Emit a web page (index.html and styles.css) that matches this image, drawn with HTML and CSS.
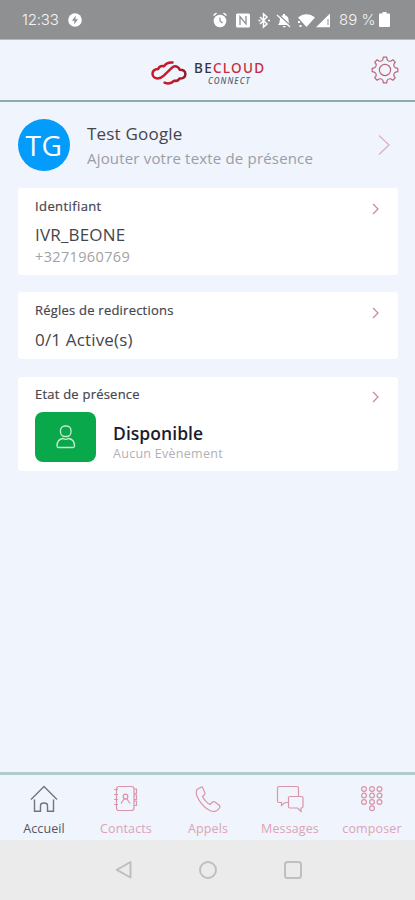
FILE: index.html
```html
<!DOCTYPE html>
<html lang="fr">
<head>
<meta charset="utf-8">
<title>BeCloud Connect</title>
<link rel="stylesheet" href="styles.css">
</head>
<body>
<div class="status">
  <span class="clock">12:33</span>
  <svg class="bolt" width="14" height="14" viewBox="0 0 14 14"><circle cx="7" cy="7" r="6.8" fill="#fff"/><path d="M7.8 2.5 4 7.8h2.5L6 11.5 10 6.2H7.400z" fill="#8f9092"/></svg>
  <svg class="sys" width="120" height="20" viewBox="0 0 120 20" fill="#fff">
    <circle cx="8" cy="11" r="6.300"/><path d="M1.500 5.500 4.500 3M14.500 5.500l-3-2.500" stroke="#fff" stroke-width="1.600"/><path d="M8 7.500V11l2.500 2" fill="none" stroke="#8f9092" stroke-width="1.200"/>
    <rect x="24" y="3.500" width="14" height="14" rx="1.500"/><path d="M28 15V6.500l6 7.500V6" fill="none" stroke="#8f9092" stroke-width="1.300"/>
    <path d="m48 7 7 7-3.500 3V4l3.500 3-7 7" fill="none" stroke="#fff" stroke-width="1.500"/><path d="M46.500 9.800h2v1.500h-2zM56 9.800h2v1.500h-2z"/>
    <path d="M66 15c2-2 1.500-4 2-6.500.5-2 2-3 3-3.200V4h2v1.300c2 .4 3.300 2 3.500 4 .2 2 0 4 1.800 5.700zM70.500 16h3.500l-1.700 1.700z"/><path d="m66 4 14 13" stroke="#8f9092" stroke-width="1.200"/><path d="m65 5 13 12" stroke="#fff" stroke-width="1.200"/>
    <path d="M86 7.500c5-4.500 12-4.500 17 0L94.500 17z"/><path d="M86 11h2v2h-2zM87.500 15h2v2h-2z"/>
    <path d="M104 17.300 118 3.500v13.800z"/><path d="M116 9v6" stroke="#8f9092"/>
  </svg>
  <span class="percent">89 %</span>
  <svg class="battery" width="11" height="15" viewBox="0 0 11 15"><path d="M3.500 0h4v1.500H10q1 0 1 1V14q0 1-1 1H1q-1 0-1-1V2.500q0-1 1-1h2.500z" fill="#fff"/></svg>
</div>
<header class="header">
  <svg class="cloud" width="36" height="24" viewBox="0 0 36 24" fill="none" stroke-linecap="round" stroke-linejoin="round">
    <defs><linearGradient id="red" x1="0" x2="1"><stop stop-color="#c51a2c"/><stop offset=".55" stop-color="#c51a2c"/><stop offset="1" stop-color="#951a2b"/></linearGradient></defs>
    <path d="M21.500 1.600c-4-.6-6.500 1-8.500 3.600-2.800-.6-5 .6-5.700 2.700C3.800 8.200 1.500 10 1.500 12.700c0 2.800 2.200 4.700 5.300 4.700 2.500 0 4-.9 5.700-2.500l8-7.700c2-2 4.300-2.200 6-1.200 1.200.7 1.900 1.500 2.200 2.800 3.500-.2 5.700 1.500 5.700 4.200 0 3-2.300 4.700-6 4.600-1 2-2.900 2.600-5.200 2.100-2.400 2.700-6 3.500-9.700 2" stroke="url(#red)" stroke-width="2.500"/>
  </svg>
  <div class="brand">
    <div class="brand-name">BE<span>CLOUD</span></div>
    <div class="brand-sub">CONNECT</div>
  </div>
  <svg class="gear" width="28" height="28" viewBox="-14 -14 28 28" fill="none" stroke="#bd6578" stroke-width="1.200" stroke-linejoin="round">
    <defs><path id="tooth" d="M-3.750-9.050Q-2.300-9.700-2.100-10.700L-1.700-12.800H1.700L2.100-10.700Q2.300-9.700 3.750-9.050"/></defs>
    <use href="#tooth"/><use href="#tooth" transform="rotate(45)"/><use href="#tooth" transform="rotate(90)"/><use href="#tooth" transform="rotate(135)"/><use href="#tooth" transform="rotate(180)"/><use href="#tooth" transform="rotate(225)"/><use href="#tooth" transform="rotate(270)"/><use href="#tooth" transform="rotate(315)"/>
    <circle r="5.600"/>
  </svg>
</header>
<main class="main">
  <section class="profile">
    <div class="avatar">TG</div>
    <div class="who">
      <div class="name">Test Google</div>
      <div class="note">Ajouter votre texte de présence</div>
    </div>
    <svg class="chev-big" width="12" height="20" viewBox="0 0 12 20"><path d="m1 .5 10 9.500L1 19.500" fill="none" stroke="#dfb0be" stroke-width="1.300"/></svg>
  </section>
  <section class="card card-id">
    <div class="card-head"><h2 class="t-id">Identifiant</h2><svg class="chev" width="7" height="12" viewBox="0 0 7 12"><path d="M1 1l5 5-5 5" fill="none" stroke="#c98694" stroke-width="1.200"/></svg></div>
    <div class="value">IVR_BEONE</div>
    <div class="phone">+3271960769</div>
  </section>
  <section class="card card-rules">
    <div class="card-head"><h2>Régles de redirections</h2><svg class="chev" width="7" height="12" viewBox="0 0 7 12"><path d="M1 1l5 5-5 5" fill="none" stroke="#c98694" stroke-width="1.200"/></svg></div>
    <div class="value">0/1 Active(s)</div>
  </section>
  <section class="card card-state">
    <div class="card-head"><h2>Etat de présence</h2><svg class="chev" width="7" height="12" viewBox="0 0 7 12"><path d="M1 1l5 5-5 5" fill="none" stroke="#c98694" stroke-width="1.200"/></svg></div>
    <div class="presence">
      <div class="badge"><svg width="20" height="24" viewBox="0 0 20 24" fill="none" stroke="#c4f0d0" stroke-width="1.300"><rect x="4.500" y="1" width="10.500" height="10.500" rx="4.500"/><path d="M7 13.500c-3.500.5-6 3-6 7.500q0 1.500 1.500 1.500h14.500q1.500 0 1.500-1.500c0-4.500-2.500-7-6-7.500-1.500 1-4 1-5.500 0z"/></svg></div>
      <div class="state">
        <div class="available">Disponible</div>
        <div class="event">Aucun Evènement</div>
      </div>
    </div>
  </section>
</main>
<nav class="tabs">
  <div class="tab active"><svg width="28" height="28" viewBox="0 0 28 28"><path d="M1 14.500 14 1.500l13 13M4.500 14.500v11.800h6v-5.800q0-2.500 3.500-2.500t3.500 2.500v5.800h6V14.500"/></svg><span>Accueil</span></div>
  <div class="tab"><svg width="28" height="28" viewBox="0 0 28 28"><rect x="4.500" y="1.500" width="17.500" height="24" rx="2.500"/><path d="M2 4.500h4M2 9.500h4M2 14.500h4M2 19.500h4M22 4h2.500v4.500H22M22 10h2.500v4.500H22M22 16h2.500v4.500H22M9 18.500l3-4.500h3l3 4.500"/><circle cx="13.500" cy="11.500" r="2.300"/></svg><span>Contacts</span></div>
  <div class="tab"><svg width="28" height="28" viewBox="0 0 28 28"><path d="M7.500 2 3 4.500C-.5 11 11 25.500 19.500 26.500c2.500.3 4-.8 6-3.500q1-1.500-.5-3l-4-3q-1.500-1-3 .5l-2 2C13.500 18.500 9.500 14 8.500 11.500l2-2q1-1.200 0-2.500L8.500 2.500Q8 1.800 7.500 2z"/></svg><span>Appels</span></div>
  <div class="tab"><svg width="28" height="28" viewBox="0 0 28 28"><path d="M12 17.500H9L5.500 20.500v-3H3q-1.500 0-1.500-1.500V3Q1.500 1.500 3 1.500h18q1.500 0 1.500 1.500v8M14 11.500h11.500q1.500 0 1.500 1.500v8.500q0 1.500-1.500 1.500H25v3.500L21.500 23H14q-1.500 0-1.500-1.500V13q0-1.500 1.500-1.500z"/></svg><span>Messages</span></div>
  <div class="tab"><svg width="28" height="28" viewBox="0 0 28 28"><circle cx="6" cy="4" r="2.400"/><circle cx="14" cy="4" r="2.400"/><circle cx="21.500" cy="4" r="2.400"/><circle cx="6" cy="10.500" r="2.400"/><circle cx="14" cy="10.500" r="2.400"/><circle cx="21.500" cy="10.500" r="2.400"/><circle cx="6" cy="17" r="2.400"/><circle cx="14" cy="17" r="2.400"/><circle cx="21.500" cy="17" r="2.400"/><circle cx="14" cy="23.300" r="2.400"/></svg><span>composer</span></div>
</nav>
<footer class="system">
  <svg width="18" height="20" viewBox="0 0 18 20"><path d="M15.500 2v15.500L1.800 9.800z"/></svg>
  <svg width="20" height="20" viewBox="0 0 20 20"><circle cx="10" cy="10" r="8"/></svg>
  <svg width="20" height="20" viewBox="0 0 20 20"><rect x="2" y="2" width="16" height="16" rx="2.500"/></svg>
</footer>
</body>
</html>
```
FILE: styles.css
```css
* { box-sizing: border-box; }
body {
  margin: 0;
  width: 415px;
  height: 900px;
  display: flex;
  flex-direction: column;
  overflow: hidden;
  background: #f0f4fc;
  color: #45464d;
  font-family: "Open Sans", "Noto Sans", sans-serif;
}
svg { display: block; flex: none; }
.status {
  height: 40px;
  flex: none;
  display: flex;
  align-items: center;
  padding: 0 25px 0 22px;
  background: #8f9092;
  border-bottom: 1px solid #b6b7b9;
  color: #f4f4f4;
  font: 15px/20px Inter, sans-serif;
  font-weight: 300;
  white-space: nowrap;
}
.clock { width: 46px; letter-spacing: -.2px; }
.sys { margin-left: 130px; }
.percent { margin-left: 7px; width: 39px; }
.battery { margin-left: auto; }
.header {
  height: 62px;
  flex: none;
  display: flex;
  align-items: center;
  padding: 0 16px 0 151px;
  border-bottom: 2px solid #8eabb0;
}
.cloud { margin-top: 6px; }
.brand { margin: 5px 0 0 7px; width: 76px; font-family: "Noto Sans", sans-serif; }
.brand-name { font-size: 13.500px; line-height: 15px; font-weight: 500; letter-spacing: 1.300px; color: #303848; }
.brand-name span { color: #c82b40; }
.brand-sub { margin-left: 14px; font-size: 8px; line-height: 9px; font-style: italic; font-weight: 500; letter-spacing: 1.100px; color: #526070; }
.gear { margin-left: auto; }
.main { flex: 1; padding: 17px 17px 0 18px; }
.profile { height: 52px; display: flex; align-items: center; margin-bottom: 17px; }
.avatar {
  width: 52px;
  height: 52px;
  flex: none;
  border-radius: 50%;
  background: #039cfb;
  color: #fff;
  font-size: 28px;
  line-height: 52px;
  text-align: center;
  letter-spacing: .5px;
}
.who { margin-left: 17px; white-space: nowrap; }
.name { font-size: 17px; line-height: 26px; letter-spacing: .2px; padding-top: 1px; }
.note { font-size: 15px; line-height: 23px; letter-spacing: .180px; color: #9b9da6; }
.chev-big { margin: 0 8px 0 auto; }
.card { background: #fff; border-radius: 3px; padding: 0 19px 0 17px; white-space: nowrap; }
.card-id { height: 87px; margin-bottom: 17px; padding-top: 8px; }
.card-rules { height: 67px; margin-bottom: 18px; padding-top: 8px; }
.card-state { height: 94px; padding-top: 7px; }
.card-head { height: 20px; display: flex; align-items: center; justify-content: space-between; }
h2 { margin: 0; font-size: 13px; line-height: 20px; font-weight: 500; letter-spacing: .220px; -webkit-text-stroke: .2px; }
.t-id { letter-spacing: .4px; }
.chev { margin-top: 5px; }
.value { font-size: 17px; line-height: 24px; margin-top: 8px; letter-spacing: .170px; }
.phone { font-size: 14.500px; line-height: 20px; letter-spacing: .350px; color: #a2a2a5; }
.presence { display: flex; margin-top: 8px; }
.badge { width: 61px; height: 50px; border-radius: 8px; background: #08a84b; display: grid; place-items: center; }
.state { margin-left: 17px; padding-top: 9px; }
.available { font-size: 17.500px; line-height: 24px; font-weight: 600; letter-spacing: .050px; color: #1b1c2c; }
.event { font-size: 12.500px; line-height: 18px; letter-spacing: .280px; color: #b1b1b4; }
.card-id .value { margin-top: 7px; }
.tabs {
  height: 68px;
  flex: none;
  display: grid;
  grid-template-columns: repeat(5, 82px);
  padding: 10px 0 0 3px;
  border-top: 3px solid #b0cdcb;
}
.tab { display: flex; flex-direction: column; align-items: center; color: #dea3b6; font-size: 12.500px; line-height: 18px; white-space: nowrap; }
.tab span { margin-top: 7px; letter-spacing: .120px; }
.tab svg { fill: none; stroke: #d995a9; stroke-width: 1.200; }
.tab.active { color: #54565e; }
.tab.active svg { stroke: #73757b; stroke-width: 1.400; }
.system { height: 60px; flex: none; background: #ebebeb; display: flex; align-items: center; justify-content: center; gap: 65px; padding-left: 2px; }
.system svg { fill: none; stroke: #bfbfbf; stroke-width: 2; stroke-linejoin: round; }
```
